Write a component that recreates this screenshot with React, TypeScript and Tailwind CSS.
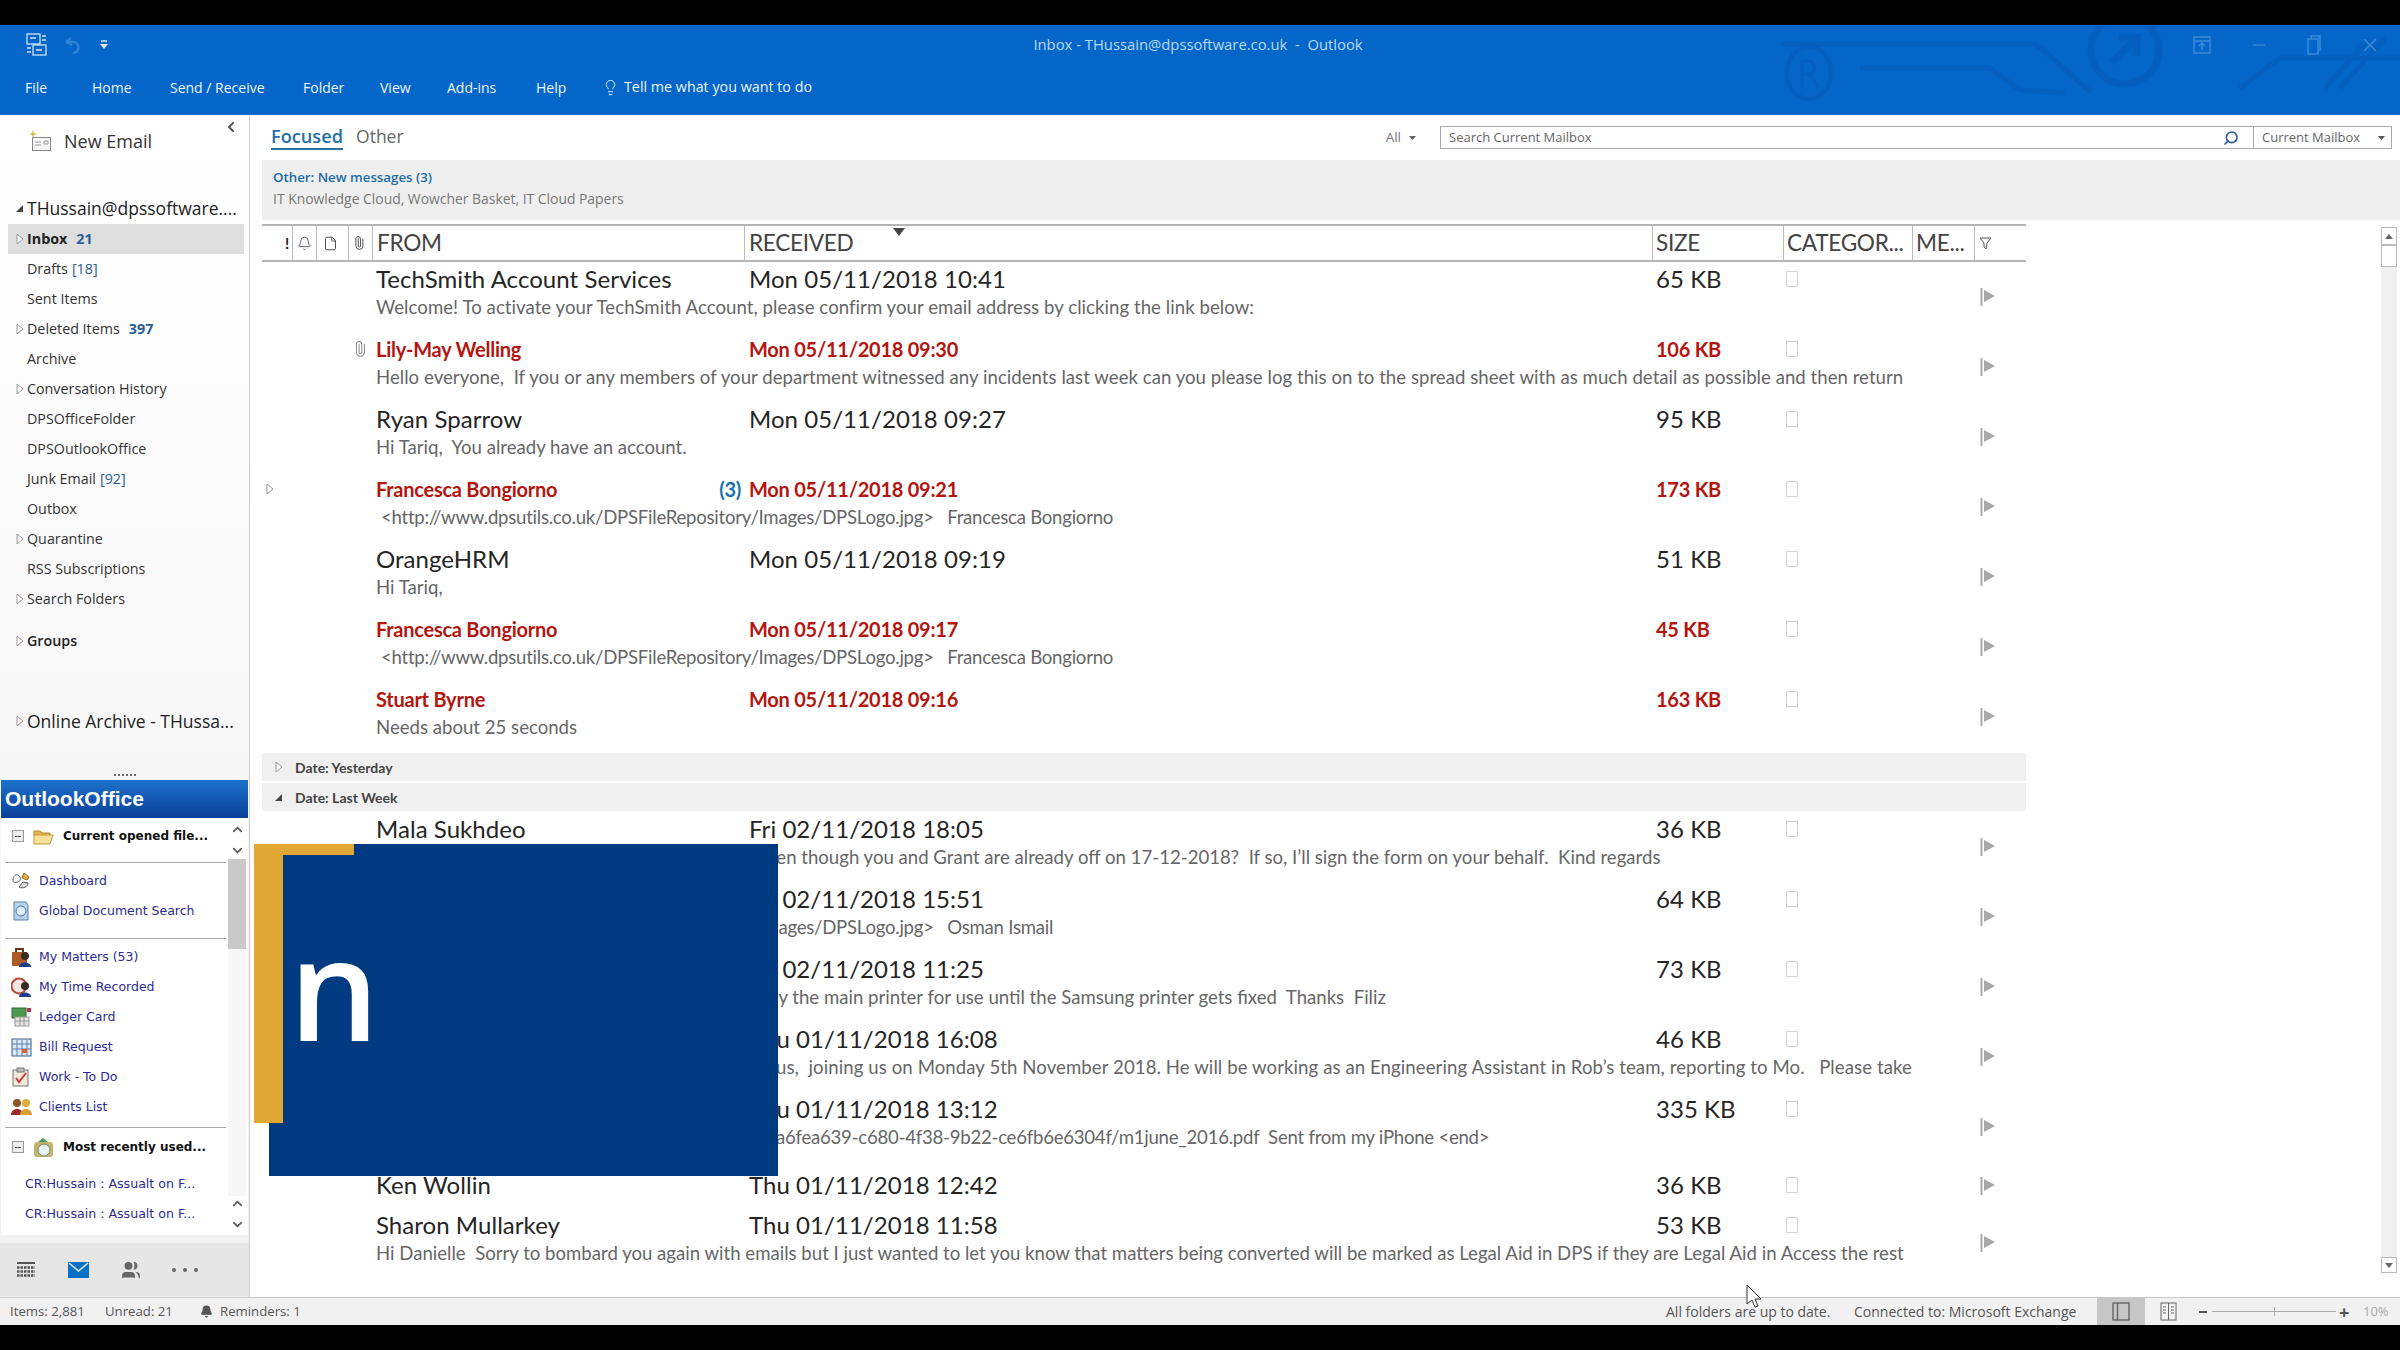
import React from "react";
import { Bell, ChevronDown, ChevronLeft, ChevronUp, File, Lightbulb, Minus, Paperclip, Search, Users, X } from "lucide-react";

type Row = {
  name?: string;
  date: string;
  size: string;
  preview: string;
  unread?: boolean;
  clip?: boolean;
  count?: string;
  expand?: boolean;
  indent?: string;
  rowClass?: string;
  flagClass?: string;
};

const url = "<http://www.dpsutils.co.uk/DPSFileRepository/Images/DPSLogo.jpg>   ";

const topRows: Row[] = [
  { name: "TechSmith Account Services", date: "Mon 05/11/2018 10:41", size: "65 KB", indent: "tracking-[0.05px]", preview: "Welcome! To activate your TechSmith Account, please confirm your email address by clicking the link below:" },
  { name: "Lily-May Welling", date: "Mon 05/11/2018 09:30", size: "106 KB", unread: true, clip: true, indent: "tracking-[0.03px]", preview: "Hello everyone,  If you or any members of your department witnessed any incidents last week can you please log this on to the spread sheet with as much detail as possible and then return" },
  { name: "Ryan Sparrow", date: "Mon 05/11/2018 09:27", size: "95 KB", preview: "Hi Tariq,  You already have an account." },
  { name: "Francesca Bongiorno", date: "Mon 05/11/2018 09:21", size: "173 KB", unread: true, count: "(3)", expand: true, indent: "pl-[5px] tracking-[-0.25px]", preview: url + "Francesca Bongiorno" },
  { name: "OrangeHRM", date: "Mon 05/11/2018 09:19", size: "51 KB", preview: "Hi Tariq," },
  { name: "Francesca Bongiorno", date: "Mon 05/11/2018 09:17", size: "45 KB", unread: true, indent: "pl-[5px] tracking-[-0.25px]", preview: url + "Francesca Bongiorno" },
  { name: "Stuart Byrne", date: "Mon 05/11/2018 09:16", size: "163 KB", unread: true, preview: "Needs about 25 seconds" },
];

const weekRows: Row[] = [
  { name: "Mala Sukhdeo", date: "Fri 02/11/2018 18:05", size: "36 KB", indent: "pl-[391px]", preview: "ven though you and Grant are already off on 17-12-2018?  If so, I\u2019ll sign the form on your behalf.  Kind regards" },
  { date: "Fri 02/11/2018 15:51", size: "64 KB", indent: "pl-[5px] tracking-[-0.25px]", preview: url + "Osman Ismail" },
  { date: "Fri 02/11/2018 11:25", size: "73 KB", indent: "pl-[398px]", preview: "ly the main printer for use until the Samsung printer gets fixed  Thanks  Filiz" },
  { date: "Thu 01/11/2018 16:08", size: "46 KB", indent: "pl-[400px] tracking-[0.08px]", preview: "us,  joining us on Monday 5th November 2018. He will be working as an Engineering Assistant in Rob\u2019s team, reporting to Mo.   Please take" },
  { date: "Thu 01/11/2018 13:12", size: "335 KB", indent: "pl-[400px] tracking-[-0.25px]", rowClass: "h-[76px]", preview: "a6fea639-c680-4f38-9b22-ce6fb6e6304f/m1june_2016.pdf  Sent from my iPhone <end>" },
  { name: "Ken Wollin", date: "Thu 01/11/2018 12:42", size: "36 KB", rowClass: "h-[40px]", flagClass: "mt-[9px]", preview: "" },
  { name: "Sharon Mullarkey", date: "Thu 01/11/2018 11:58", size: "53 KB", preview: "Hi Danielle  Sorry to bombard you again with emails but I just wanted to let you know that matters being converted will be marked as Legal Aid in DPS if they are Legal Aid in Access the rest" },
];

const folders = [
  { name: "Inbox", count: "21", bold: true, selected: true, arrow: true },
  { name: "Drafts", note: "[18]" },
  { name: "Sent Items" },
  { name: "Deleted Items", count: "397", arrow: true },
  { name: "Archive" },
  { name: "Conversation History", arrow: true },
  { name: "DPSOfficeFolder" },
  { name: "DPSOutlookOffice" },
  { name: "Junk Email", note: "[92]" },
  { name: "Outbox" },
  { name: "Quarantine", arrow: true },
  { name: "RSS Subscriptions" },
  { name: "Search Folders", arrow: true },
];

const menu = [
  { label: "File", cls: "w-[67px]" },
  { label: "Home", cls: "w-[78px]" },
  { label: "Send / Receive", cls: "w-[133px]" },
  { label: "Folder", cls: "w-[77px]" },
  { label: "View", cls: "w-[67px]" },
  { label: "Add-ins", cls: "w-[89px]" },
  { label: "Help", cls: "w-[66px]" },
];

function Tri({ open }: { open?: boolean }) {
  return open ? (
    <svg width="9" height="9" viewBox="0 0 9 9" className="shrink-0">
      <path d="M8 1v7H1z" fill="#444" />
    </svg>
  ) : (
    <svg width="8" height="12" viewBox="0 0 8 12" className="shrink-0">
      <path d="M1 1l6 5-6 5z" fill="#fff" stroke="#999" />
    </svg>
  );
}

function Flag() {
  return (
    <svg width="15" height="18" viewBox="0 0 15 18">
      <path d="M1.5 0v18" stroke="#a8a8a8" strokeWidth="2" />
      <path d="M4 2l11 6-11 6z" fill="#a8a8a8" />
    </svg>
  );
}

function MailRow({ row }: { row: Row }) {
  const tone = row.unread
    ? "text-[#b5150f] font-bold text-[20px] tracking-[-0.25px]"
    : "text-[#252525] text-[24px] tracking-[0.05px]";
  return (
    <div className={`grid grid-cols-[110px_372px_908px_131px_129px_114px] grid-rows-[34px_auto] [font-family:Lato,sans-serif] ${row.rowClass ?? "h-[70px]"}`}>
      <div className="flex items-center justify-end pr-[4px]">
        {row.clip && <Paperclip size={16} strokeWidth={1.5} className="text-[#888] -rotate-45" />}
        {row.expand && (
          <div className="mr-[94px]">
            <Tri />
          </div>
        )}
      </div>
      <div className={`flex items-center justify-between pl-[4px] pr-[3px] ${tone}`}>
        <span className="whitespace-nowrap">{row.name}</span>
        {row.count && <span className="text-[#1b6fae]">{row.count}</span>}
      </div>
      <div className={`flex items-center pl-[5px] whitespace-nowrap ${tone}`}>{row.date}</div>
      <div className={`flex items-center pl-[4px] whitespace-nowrap ${tone}`}>{row.size}</div>
      <div className="flex items-center pl-[3px]">
        <div className="w-[12px] h-[16px] border border-[#d4d4d4]" />
      </div>
      <div className={`row-span-2 pl-[68px] ${row.flagClass ?? "mt-[26px]"}`}>
        <Flag />
      </div>
      <div className={`col-start-2 col-span-4 row-start-2 whitespace-pre text-[18.6px] leading-[22px] text-[#666] pl-[4px]`}>
        <div className={row.indent}>{row.preview}</div>
      </div>
    </div>
  );
}

function DateBand({ label, open, cls }: { label: string; open?: boolean; cls: string }) {
  return (
    <div className={`h-[28px] bg-[#f0f0f0] flex items-center [font-family:Lato,sans-serif] font-bold text-[14px] text-[#444] ${cls}`}>
      <div className="w-[33px] flex justify-center">
        <Tri open={open} />
      </div>
      {label}
    </div>
  );
}

function PanelLink({ icon, label }: { icon: React.ReactNode; label: string }) {
  return (
    <div className="h-[30px] flex items-center text-[12.5px] text-[#2b2b95] pl-[6px]">
      <div className="w-[28px] flex items-center">{icon}</div>
      <span className="whitespace-nowrap">{label}</span>
    </div>
  );
}

function ScrollArrows() {
  return (
    <div className="flex flex-col items-center gap-[6px] text-[#555]">
      <ChevronUp size={15} strokeWidth={2.5} />
      <ChevronDown size={15} strokeWidth={2.5} />
    </div>
  );
}

function MinusBox() {
  return (
    <div className="w-[12px] h-[12px] border border-[#999] bg-[#eee] flex items-center justify-center shrink-0">
      <div className="w-[6px] h-px bg-[#555]" />
    </div>
  );
}

const icons = {
  dash: (
    <svg width="20" height="20" viewBox="0 0 20 20">
      <path d="M2 9c0-4 3-6 5-5s4 6 0 7-5 0-5-2z" fill="#fff" stroke="#555" />
      <path d="M8 16c4 2 9 0 9-4l-5-1z" fill="#ddd" stroke="#555" />
      <path d="M13 2l5 4-2 3-5-2z" fill="#e8b13a" stroke="#8a6a1f" />
    </svg>
  ),
  doc: (
    <svg width="20" height="20" viewBox="0 0 20 20">
      <path d="M3 1h12l2 3v15H3z" fill="#b9d2ec" stroke="#5f7fa8" />
      <circle cx="10" cy="10" r="5" fill="#dff0ff" stroke="#4a78b0" />
    </svg>
  ),
  matters: (
    <svg width="21" height="21" viewBox="0 0 21 21">
      <rect x="1" y="5" width="15" height="14" rx="1" fill="#b2592a" />
      <path d="M5 5V2h7v3" fill="none" stroke="#6b3518" strokeWidth="2" />
      <circle cx="14" cy="9" r="4" fill="#3a2a20" />
      <path d="M8 20c0-6 12-6 12 0z" fill="#1a3e8a" />
    </svg>
  ),
  time: (
    <svg width="21" height="21" viewBox="0 0 21 21">
      <circle cx="8" cy="9" r="7.5" fill="#f4e6e2" stroke="#b84a3a" strokeWidth="2" />
      <circle cx="14" cy="9" r="4" fill="#3a2a20" />
      <path d="M8 20c0-6 12-6 12 0z" fill="#1a3e8a" />
    </svg>
  ),
  ledger: (
    <svg width="21" height="20" viewBox="0 0 21 20">
      <rect x="1" y="1" width="14" height="10" fill="#4c9a4f" stroke="#2c6a30" />
      <rect x="4" y="10" width="14" height="9" fill="#e4e4e4" stroke="#999" />
      <path d="M4 14h14M9 10v9M13 10v9" stroke="#999" />
      <rect x="16" y="1" width="4" height="4" fill="#c22f58" />
    </svg>
  ),
  bill: (
    <svg width="21" height="20" viewBox="0 0 21 20">
      <rect x="1" y="2" width="19" height="17" fill="#dbe8f6" stroke="#3e5f8c" />
      <path d="M1 7h19M1 12h19M6 3v16M11 3v16M16 3v16" stroke="#5f80ae" />
      <rect x="11" y="12" width="5" height="4" fill="#d8643a" />
    </svg>
  ),
  todo: (
    <svg width="20" height="20" viewBox="0 0 20 20">
      <rect x="2" y="3" width="15" height="16" fill="#f2ead8" stroke="#777" />
      <rect x="6" y="1" width="7" height="4" fill="#bbb" stroke="#777" />
      <path d="M5 11l3 4 7-9" fill="none" stroke="#d43a3a" strokeWidth="2" />
    </svg>
  ),
  clients: (
    <svg width="21" height="18" viewBox="0 0 21 18">
      <circle cx="6" cy="5" r="4" fill="#8a5a26" />
      <path d="M0 17c0-8 12-8 12 0z" fill="#9a2a2a" />
      <circle cx="15" cy="5" r="4" fill="#e0ac3a" />
      <path d="M9 17c0-8 12-8 12 0z" fill="#d8a030" />
    </svg>
  ),
};

export default function App() {
  return (
    <div className="relative h-[1350px] w-full overflow-hidden bg-black pt-[25px] pb-[25px] flex flex-col [font-family:'Open_Sans',sans-serif]">
      {/* リボン */}
      <header className="relative h-[90px] shrink-0 bg-[#0366c8] text-white overflow-hidden">
        <svg width="2400" height="90" viewBox="0 0 2400 90" className="absolute left-0 top-0" fill="none" stroke="#055fbf" strokeWidth="5">
          <path d="M1781 19h255l55 48" />
          <path d="M1860 43h130l30 22 45 3" />
          <circle cx="2125" cy="25" r="34" strokeWidth="7" />
          <path d="M2112 38l25-26M2118 12h19v19" strokeWidth="7" />
          <ellipse cx="1809" cy="48" rx="22" ry="26" strokeWidth="4" />
          <path d="M1802 62V36h8a7 7 0 0 1 0 13h-8M1810 49l8 13" strokeWidth="3" />
          <path d="M2240 63l40-30h120M2325 63l45-50M2340 63l45-50" />
        </svg>
        <div className="relative h-[39px] grid grid-cols-[1fr_auto_1fr] items-center">
          <div className="flex items-center pl-[26px]">
            <svg width="22" height="24" viewBox="0 0 22 24" fill="none" stroke="#cfe3f7" strokeWidth="1.3">
              <rect x="1" y="1" width="13" height="10" />
              <rect x="7" y="12" width="13" height="10" />
              <path d="M4 5h6M10 17h6M16 3h4M16 7h4M1 15h4M1 19h4" />
            </svg>
            <svg width="18" height="20" viewBox="0 0 18 20" className="ml-[16px]" fill="none" stroke="#2f83d6" strokeWidth="2.5">
              <path d="M2 7l5-4M2 7l6 3M3 7h6a5 5 0 0 1 0 11" />
            </svg>
            <svg width="8" height="12" viewBox="0 0 8 12" className="ml-[18px]">
              <path d="M1 2h6" stroke="#dcebfa" strokeWidth="1.5" />
              <path d="M0 5h8l-4 5z" fill="#dcebfa" />
            </svg>
          </div>
          <div className="text-[14.8px] text-[#bcd8f3] whitespace-pre pr-[4px]">Inbox - THussain@dpssoftware.co.uk  -  Outlook</div>
          <div className="flex justify-end items-center gap-[38px] pr-[19px] text-[#3b8ad8]">
            <svg width="18" height="18" viewBox="0 0 18 18" fill="none" stroke="currentColor" strokeWidth="1.5">
              <rect x="1" y="1" width="16" height="16" />
              <path d="M1 5h16M9 14V8M6 10l3-3 3 3" />
            </svg>
            <Minus size={20} strokeWidth={1.5} />
            <svg width="14" height="20" viewBox="0 0 14 20" fill="none" stroke="currentColor" strokeWidth="1.5">
              <rect x="1" y="4" width="10" height="15" />
              <path d="M4 4V1h9v14h-2" />
            </svg>
            <X size={22} strokeWidth={1.5} />
          </div>
        </div>
        <nav className="relative flex items-center h-[46px] pl-[25px] text-[14px] text-[#eef5fc]">
          {menu.map((m) => (
            <div key={m.label} className={m.cls}>
              {m.label}
            </div>
          ))}
          <Lightbulb size={17} strokeWidth={1.3} className="mr-[5px]" />
          <span className="text-[14.3px]">Tell me what you want to do</span>
        </nav>
      </header>

      <div className="flex flex-1 min-h-0 bg-white">
        {/* サイドバー */}
        <aside className="w-[250px] shrink-0 border-r border-[#cfcfcf] bg-linear-to-b from-white to-[#f1f1f1] flex flex-col text-[#333]">
          <div className="relative h-[52px] flex items-center pl-[30px] text-[18px] text-[#333]">
            <svg width="22" height="24" viewBox="0 0 22 24" className="mr-[12px]" fill="none">
              <path d="M3 1l1 3 3 1-3 1-1 3-1-3-3-1 3-1z" fill="#e3b94d" />
              <rect x="2.5" y="8.5" width="18" height="13" fill="#f7f7f7" stroke="#888" />
              <path d="M5 13h6M5 16h6M14 12h4v3h-4z" stroke="#999" />
            </svg>
            New Email
            <ChevronLeft size={16} strokeWidth={3} className="absolute right-[10px] top-[4px] text-[#555]" />
          </div>
          <div className="mt-[26px] h-[30px] flex items-center pl-[15px] text-[17.5px] whitespace-nowrap text-[#222]">
            <div className="mr-[3px]">
              <Tri open />
            </div>
            THussain@dpssoftware....
          </div>
          <div className="mt-px text-[14.3px]">
            {folders.map((f) => (
              <div key={f.name} className={`h-[30px] ml-[8px] mr-[5px] flex items-center ${f.selected ? "bg-[#dedede]" : ""}`}>
                <div className="w-[19px] flex justify-start pl-[8px]">{f.arrow && <Tri />}</div>
                <span className={f.bold ? "font-bold text-[#222]" : ""}>{f.name}</span>
                {f.count && <span className="ml-[9px] font-bold text-[#2a5f98]">{f.count}</span>}
                {f.note && <span className="ml-[4px] text-[#2a5f98]">{f.note}</span>}
              </div>
            ))}
          </div>
          <div className="mt-[12px] h-[30px] flex items-center text-[14.3px] font-semibold text-[#222] pl-[16px]">
            <div className="w-[11px]">
              <Tri />
            </div>
            Groups
          </div>
          <div className="mt-[50px] h-[30px] flex items-center text-[17.5px] text-[#222] pl-[16px] whitespace-nowrap">
            <div className="w-[11px]">
              <Tri />
            </div>
            Online Archive - THussa...
          </div>
          <div className="mt-[33px] h-[11px] flex justify-center items-center text-[#555]">
            <div className="w-[22px] border-t-2 border-dotted border-[#666]" />
          </div>
          <div className="h-[38px] mx-px bg-linear-to-b from-[#1e72cc] to-[#0a3f98] flex items-center pl-[4px] text-white font-bold text-[21px] [font-family:'Liberation_Sans',sans-serif]">
            OutlookOffice
          </div>
          <div className="h-[417px] mx-px bg-white flex [font-family:'DejaVu_Sans',sans-serif]">
            <div className="w-[225px] pl-[4px]">
              <div className="h-[45px] border-b border-[#aaa] flex items-start pt-[9px]">
                <div className="flex items-center pl-[7px]">
                  <MinusBox />
                  <svg width="21" height="17" viewBox="0 0 21 17" className="ml-[9px]">
                    <path d="M1 3h6l2 2h8v3H1z" fill="#e6b64a" stroke="#b8862a" />
                    <path d="M1 7h19l-3 9H1z" fill="#f7e19a" stroke="#c29a3a" />
                  </svg>
                  <span className="ml-[9px] text-[12px] font-bold text-[#111] whitespace-nowrap">Current opened file...</span>
                </div>
              </div>
              <div className="pt-[3px] pb-[12px] border-b border-[#aaa]">
                <PanelLink icon={icons.dash} label="Dashboard" />
                <PanelLink icon={icons.doc} label="Global Document Search" />
              </div>
              <div className="pt-[3px] pb-[5px] border-b border-[#aaa]">
                <PanelLink icon={icons.matters} label="My Matters (53)" />
                <PanelLink icon={icons.time} label="My Time Recorded" />
                <PanelLink icon={icons.ledger} label="Ledger Card" />
                <PanelLink icon={icons.bill} label="Bill Request" />
                <PanelLink icon={icons.todo} label="Work - To Do" />
                <PanelLink icon={icons.clients} label="Clients List" />
              </div>
              <div className="h-[38px] flex items-center pl-[7px]">
                <MinusBox />
                <svg width="21" height="21" viewBox="0 0 21 21" className="ml-[9px]">
                  <rect x="1" y="5" width="19" height="15" rx="3" fill="#c9b36a" />
                  <circle cx="11" cy="13" r="6" fill="#e8f0f4" stroke="#5f8f7a" />
                  <path d="M5 5l5-4 5 4z" fill="#4b9a5a" />
                </svg>
                <span className="ml-[9px] text-[12px] font-bold text-[#111] whitespace-nowrap">Most recently used...</span>
              </div>
              <div className="pt-[3px] text-[12.6px] text-[#2b2b95] pl-[20px]">
                <div className="h-[30px] flex items-center whitespace-nowrap">CR:Hussain : Assualt on F...</div>
                <div className="h-[30px] flex items-center whitespace-nowrap">CR:Hussain : Assualt on F...</div>
              </div>
            </div>
            <div className="ml-[2px] w-[18px] flex flex-col items-center pt-[4px] pb-[3px]">
              <ScrollArrows />
              <div className="w-full h-[90px] bg-[#c9c9c9] mt-[1px]" />
              <div className="flex-1 w-full bg-[#f7f7f7]" />
              <ScrollArrows />
            </div>
          </div>
          <div className="h-[8px] shrink-0" />
          <div className="h-[53px] bg-[#e6e6e6] flex items-center pl-[17px]">
            <svg width="18" height="15" viewBox="0 0 18 15" className="mr-[33px]">
              <path d="M0 1h18" stroke="#555" strokeWidth="2" />
              <path d="M0 5.5h18M0 9.5h18M0 13.5h18" stroke="#555" strokeWidth="2.5" strokeDasharray="2.5 1" />
            </svg>
            <svg width="21" height="16" viewBox="0 0 21 16" className="mr-[32px]">
              <rect width="21" height="16" fill="#0a72c6" />
              <path d="M1 1l9.5 8L20 1" fill="none" stroke="#e6e6e6" strokeWidth="1.6" />
            </svg>
            <Users size={20} fill="#666" strokeWidth={1.5} className="text-[#666] mr-[31px]" />
            <div className="flex gap-[7px]">
              <div className="w-[4px] h-[4px] rounded-full bg-[#666]" />
              <div className="w-[4px] h-[4px] rounded-full bg-[#666]" />
              <div className="w-[4px] h-[4px] rounded-full bg-[#666]" />
            </div>
          </div>
        </aside>

        {/* メインコンテンツ */}
        <main className="flex-1 min-w-0 flex flex-col">
          <div className="h-[45px] flex shrink-0">
            <div className="pl-[21px] pt-[9px] flex gap-[13px] items-start text-[18.2px]">
              <span className="text-[#1f6fa8] font-semibold h-[24px] leading-[24px] border-b-2 border-[#2f6f9f] box-content">Focused</span>
              <span className="text-[#666] leading-[24px] text-[17.5px]">Other</span>
            </div>
            <div className="ml-auto flex items-start pt-[11px] pr-[8px]">
              <div className="h-[23px] mr-[24px] flex items-center text-[13.5px] text-[#777]">
                All
                <svg width="7" height="4" viewBox="0 0 7 4" className="ml-[8px]">
                  <path d="M0 0h7L3.5 4z" fill="#666" />
                </svg>
              </div>
              <div className="w-[952px] h-[23px] border border-[#aaa] flex items-center text-[13px] text-[#666]">
                <span className="pl-[8px]">Search Current Mailbox</span>
                <Search size={16} strokeWidth={2.5} className="ml-auto mr-[14px] text-[#2f5f96] -scale-x-100" />
                <div className="w-[138px] h-full border-l border-[#aaa] flex items-center justify-between pl-[8px] pr-[6px]">
                  Current Mailbox
                  <svg width="7" height="4" viewBox="0 0 7 4">
                    <path d="M0 0h7L3.5 4z" fill="#555" />
                  </svg>
                </div>
              </div>
            </div>
          </div>
          <div className="ml-[12px] h-[60px] shrink-0 bg-[#efefef] pl-[11px] pt-[8px] text-[13.3px]">
            <div className="font-semibold text-[#1a6aa5] h-[20px]">Other: New messages (3)</div>
            <div className="text-[#777] mt-px text-[13.9px]">IT Knowledge Cloud, Wowcher Basket, IT Cloud Papers</div>
          </div>
          <div className="flex flex-1 min-h-0 pt-[4px]">
            <div className="ml-[12px] w-[1764px] shrink-0">
              <div className="h-[38px] border-y-2 border-[#b5b5b5] grid grid-cols-[30px_24px_32px_24px_372px_908px_131px_129px_62px_52px] items-center [font-family:Lato,sans-serif] text-[22.6px] text-[#444] tracking-[-0.3px]">
                <div className="text-right pr-[3px] text-[15px] font-bold text-[#222]">!</div>
                <div className="h-full border-l border-[#bbb] flex items-center justify-center">
                  <Bell size={15} strokeWidth={1.3} />
                </div>
                <div className="h-full border-l border-[#bbb] flex items-center justify-center pr-[4px]">
                  <File size={15} strokeWidth={1.5} />
                </div>
                <div className="h-full border-l border-[#bbb] flex items-center justify-center pr-[4px]">
                  <Paperclip size={14} strokeWidth={1.5} className="-rotate-45" />
                </div>
                <div className="h-full border-l border-[#bbb] flex items-center pl-[4px]">FROM</div>
                <div className="relative h-full border-l border-[#bbb] flex items-center pl-[4px]">
                  RECEIVED
                  <svg width="12" height="8" viewBox="0 0 12 8" className="absolute left-[148px] top-[2px]">
                    <path d="M0 0h12L6 8z" fill="#444" />
                  </svg>
                </div>
                <div className="h-full border-l border-[#bbb] flex items-center pl-[3px]">SIZE</div>
                <div className="h-full border-l border-[#bbb] flex items-center pl-[3px]">CATEGOR...</div>
                <div className="h-full border-l border-[#bbb] flex items-center pl-[3px]">ME...</div>
                <div className="h-full border-l border-[#bbb] flex items-center pl-[4px]">
                  <svg width="13" height="15" viewBox="0 0 13 15" fill="none" stroke="#555">
                    <path d="M1 2h11L8 7l-1 6-2-2V7z" />
                  </svg>
                </div>
              </div>
              {topRows.map((r, i) => (
                <MailRow key={i} row={r} />
              ))}
              <DateBand label="Date: Yesterday" cls="mt-px" />
              <DateBand label="Date: Last Week" open cls="mt-[2px] mb-px" />
              {weekRows.map((r, i) => (
                <MailRow key={i} row={r} />
              ))}
            </div>
            <div className="ml-auto mr-[3px] mt-[3px] w-[16px] h-[1046px] bg-[#f0f0f0] flex flex-col">
              <div className="h-[18px] border border-[#bbb] bg-white flex items-center justify-center">
                <svg width="8" height="5" viewBox="0 0 8 5"><path d="M4 0l4 5H0z" fill="#666" /></svg>
              </div>
              <div className="h-[22px] border border-[#bbb] bg-white" />
              <div className="flex-1" />
              <div className="h-[16px] border border-[#bbb] bg-white flex items-center justify-center">
                <svg width="8" height="5" viewBox="0 0 8 5"><path d="M4 5l4-5H0z" fill="#666" /></svg>
              </div>
            </div>
          </div>
        </main>
      </div>

      {/* ステータスバー */}
      <footer className="h-[28px] shrink-0 bg-[#f1f1f1] border-t border-[#c8c8c8] flex items-center text-[13.2px] text-[#555]">
        <span className="pl-[10px] w-[105px]">Items: 2,881</span>
        <span className="w-[95px]">Unread: 21</span>
        <Bell size={13} fill="#555" className="mr-[7px]" />
        <span>Reminders: 1</span>
        <span className="ml-auto w-[188px] whitespace-nowrap text-[14px]">All folders are up to date.</span>
        <span className="w-[243px] whitespace-nowrap text-[14px]">Connected to: Microsoft Exchange</span>
        <div className="w-[48px] h-full bg-[#c6c6c6] flex items-center justify-center">
          <svg width="18" height="19" viewBox="0 0 18 19" fill="none" stroke="#666" strokeWidth="1.4">
            <rect x="1" y="1" width="16" height="17" />
            <path d="M5.5 1v17" />
          </svg>
        </div>
        <svg width="17" height="19" viewBox="0 0 17 19" className="ml-[15px]" fill="none" stroke="#666">
          <rect x="1" y="1" width="15" height="17" />
          <path d="M8.5 1v17M3 5h3M3 8h3M3 11h3M11 5h3M11 8h3M11 11h3" />
        </svg>
        <div className="ml-[22px] w-[8px] h-[2px] bg-[#555]" />
        <div className="ml-[5px] relative w-[124px] h-px bg-[#aaa]">
          <div className="absolute left-[62px] -top-[4px] w-px h-[9px] bg-[#aaa]" />
        </div>
        <div className="ml-[3px] w-[14px] text-[18px] font-bold leading-none text-[#555]">+</div>
        <span className="ml-[10px] w-[37px] text-[13px] text-[#aaa]">10%</span>
      </footer>

      {/* 動画のオーバーレイ */}
      <div className="absolute left-[254px] top-[844px] w-[524px] h-[332px]">
        <div className="absolute left-0 top-0 w-[29px] h-[279px] bg-[#e0a835]" />
        <div className="absolute left-0 top-0 w-[100px] h-[11px] bg-[#e0a835]" />
        <div className="absolute left-[15px] top-[279px] w-[509px] h-[53px] bg-[#003a80]" />
        <div className="absolute left-[29px] top-[11px] w-[495px] h-[268px] bg-[#003a80]" />
        <div className="absolute left-[100px] top-0 w-[424px] h-[11px] bg-[#003a80]" />
        <div className="absolute left-[35px] top-[57px] text-white font-semibold text-[142px] leading-[1.2]">n</div>
      </div>

      {/* カーソル */}
      <svg width="17" height="25" viewBox="0 0 17 25" className="absolute left-[1746px] top-[1284px]">
        <path d="M1 1v19l5-4 3 7 3-1-3-7h6z" fill="#fff" stroke="#333" />
      </svg>
    </div>
  );
}
